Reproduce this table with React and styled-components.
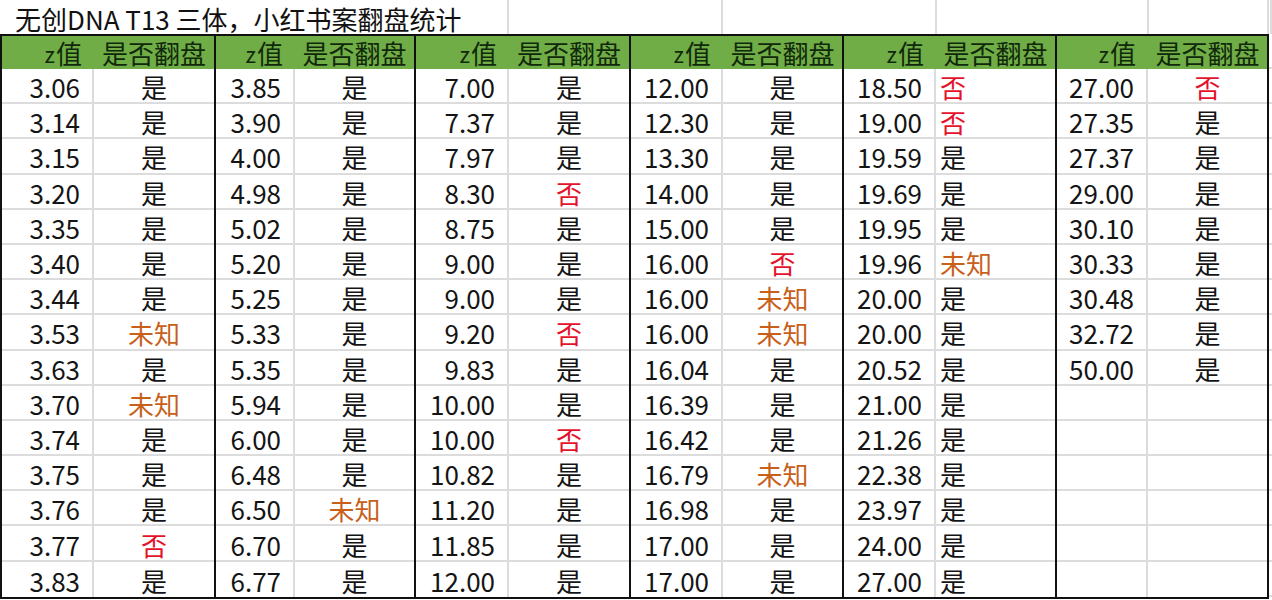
import React from "react";
import styled, { createGlobalStyle } from "styled-components";

const GlobalStyle = createGlobalStyle`
  html, body { margin: 0; padding: 0; background: #ffffff; }
  body { font-family: "Noto Sans CJK SC", "Noto Sans", sans-serif; }
`;

const GRID = "#dcdcdc";
const INK = "#111111";

const Sheet = styled.div`
  width: 1272px;
  height: 600px;
  overflow: hidden;
  display: flex;
  flex-direction: column;
  background: #fff;
`;

const TitleRow = styled.div`
  display: flex;
  height: 34px;
  flex: none;
  position: relative;
  z-index: 1;
`;

const TitleCell = styled.div`
  flex: none;
  width: ${(p) => p.$w}px;
  box-sizing: border-box;
  border-right: 2px solid ${GRID};
  height: 34px;
`;

const TitleText = styled.div`
  padding-left: 15px;
  font-size: 26px;
  line-height: normal;
  white-space: nowrap;
  color: #111;
`;

const TableRow = styled.div`
  display: flex;
  flex: none;
`;

const Groups = styled.div`
  display: flex;
  border-top: 2px solid ${INK};
  border-bottom: 2px solid ${INK};
  border-left: 2px solid ${INK};
`;

const Group = styled.div`
  display: grid;
  grid-template-columns: ${(p) => p.$z}px ${(p) => p.$v}px;
  grid-template-rows: 33px repeat(15, 35.2px);
  border-right: 2px solid ${INK};
`;

const HeadCell = styled.div`
  background: #70ad47;
  color: #10290a;
  font-size: 26px;
  line-height: 1;
  display: flex;
  align-items: center;
  justify-content: ${(p) => p.$justify};
  padding: 0 ${(p) => p.$pad}px;
  white-space: nowrap;
`;

const ZLetter = styled.span`
  font-size: 22px;
  margin-right: 1px;
`;

const Cell = styled.div`
  box-sizing: border-box;
  border-bottom: ${(p) => (p.$last ? "none" : `2px solid ${GRID}`)};
  border-right: ${(p) => (p.$divider ? `2px solid ${GRID}` : "none")};
  display: flex;
  align-items: center;
  justify-content: ${(p) => p.$justify};
  padding: 3px ${(p) => p.$padR}px 0 ${(p) => p.$padL}px;
  font-size: ${(p) => p.$size}px;
  line-height: 1;
  color: ${(p) => p.$color};
  white-space: nowrap;
`;

const Filler = styled.div`
  width: 3px;
  display: flex;
  flex-direction: column;
`;

const FillerPiece = styled.div`
  box-sizing: border-box;
  height: ${(p) => p.$h}px;
  border-bottom: 2px solid ${GRID};
`;

const COLORS = { 是: "#141414", 否: "#e5122b", 未知: "#c8601a" };

const data = [
  {
    z: 92, v: 120, align: "center",
    rows: "3.06 是|3.14 是|3.15 是|3.20 是|3.35 是|3.40 是|3.44 是|3.53 未知|3.63 是|3.70 未知|3.74 是|3.75 是|3.76 是|3.77 否|3.83 是",
  },
  {
    z: 79, v: 119, align: "center",
    rows: "3.85 是|3.90 是|4.00 是|4.98 是|5.02 是|5.20 是|5.25 是|5.33 是|5.35 是|5.94 是|6.00 是|6.48 是|6.50 未知|6.70 是|6.77 是",
  },
  {
    z: 93, v: 120, align: "center",
    rows: "7.00 是|7.37 是|7.97 是|8.30 否|8.75 是|9.00 是|9.00 是|9.20 否|9.83 是|10.00 是|10.00 否|10.82 是|11.20 是|11.85 是|12.00 是",
  },
  {
    z: 92, v: 119, align: "center",
    rows: "12.00 是|12.30 是|13.30 是|14.00 是|15.00 是|16.00 否|16.00 未知|16.00 未知|16.04 是|16.39 是|16.42 是|16.79 未知|16.98 是|17.00 是|17.00 是",
  },
  {
    z: 92, v: 119, align: "flex-start",
    rows: "18.50 否|19.00 否|19.59 是|19.69 是|19.95 是|19.96 未知|20.00 是|20.00 是|20.52 是|21.00 是|21.26 是|22.38 是|23.97 是|24.00 是|27.00 是",
  },
  {
    z: 91, v: 119, align: "center",
    rows: "27.00 否|27.35 是|27.37 是|29.00 是|30.10 是|30.33 是|30.48 是|32.72 是|50.00 是",
  },
];

function parseRows(str) {
  const list = str.split("|").map((r) => {
    const [z, v] = r.split(" ");
    return { z, v };
  });
  while (list.length < 15) list.push({ z: "", v: "" });
  return list;
}

export default function App() {
  return (
    <>
      <GlobalStyle />
      <Sheet>
        <TitleRow>
          <TitleCell $w={509}>
            <TitleText>无创DNA T13 三体，小红书案翻盘统计</TitleText>
          </TitleCell>
          <TitleCell $w={214} />
          <TitleCell $w={214} />
          <TitleCell $w={212} />
          <TitleCell $w={120} />
          <TitleCell $w={3} />
        </TitleRow>
        <TableRow>
          <Groups>
            {data.map((g, gi) => {
              const rows = parseRows(g.rows);
              return (
                <Group key={gi} $z={g.z} $v={g.v}>
                  <HeadCell $justify="flex-end" $pad={12}>
                    <ZLetter>z</ZLetter>值
                  </HeadCell>
                  <HeadCell $justify="center" $pad={0}>
                    是否翻盘
                  </HeadCell>
                  {rows.map((r, ri) => (
                    <React.Fragment key={ri}>
                      <Cell
                        $divider
                        $last={ri === 14}
                        $justify="flex-end"
                        $padL={0}
                        $padR={12}
                        $size={26}
                        $color="#141414"
                      >
                        {r.z}
                      </Cell>
                      <Cell
                        $last={ri === 14}
                        $justify={g.align}
                        $padL={g.align === "flex-start" ? 4 : 0}
                        $padR={0}
                        $size={26}
                        $color={COLORS[r.v] || "#141414"}
                      >
                        {r.v}
                      </Cell>
                    </React.Fragment>
                  ))}
                </Group>
              );
            })}
          </Groups>
          <Filler>
            <FillerPiece $h={35} />
            {Array.from({ length: 15 }).map((_, i) => (
              <FillerPiece key={i} $h={35.2} />
            ))}
          </Filler>
        </TableRow>
      </Sheet>
    </>
  );
}
